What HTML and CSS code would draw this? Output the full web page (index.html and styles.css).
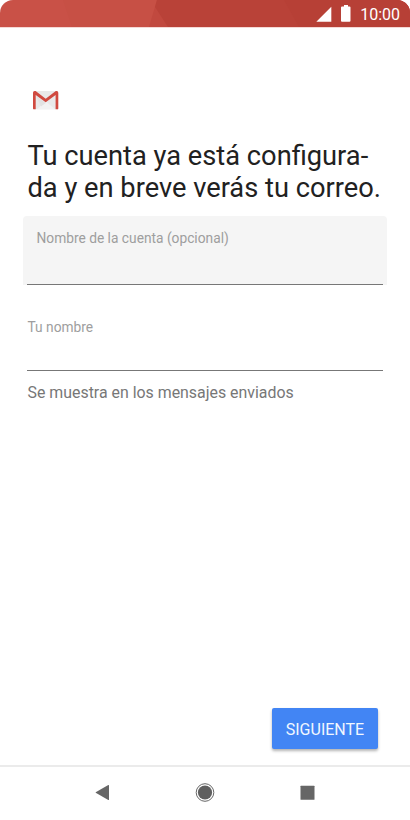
FILE: index.html
```html
<!DOCTYPE html>
<html lang="es">
<head>
<meta charset="utf-8">
<title>Gmail</title>
<link rel="stylesheet" href="styles.css">
</head>
<body>
<div class="screen">
  <header class="status">
    <svg class="status-bg" width="410" height="28" viewBox="0 0 410 28">
      <path fill="#c95147" d="M0 0H410V27H0Z"/>
      <path fill="#c75045" d="M63 0H158L149 27H72Z"/>
      <path fill="#c1493f" d="M157 0H180V27H149Z"/>
      <path fill="#b94238" d="M157 0H410V27H168L155 7Z"/>
      <path fill="#b74036" d="M284 0H410V27H299Z"/>
      <path fill="#f5d9d6" d="M0 27H410V28H0Z"/>
    </svg>
    <svg class="signal" width="16" height="16" viewBox="0 0 16 16"><path fill="#fff" d="M15.3 .7V15.7H.3Z"/></svg>
    <svg class="battery" width="10" height="17" viewBox="0 0 10 17"><path fill="#fff" d="M3 0H7V1.6H8.5Q9.5 1.6 9.5 2.6V15.7Q9.5 16.7 8.5 16.7H1Q0 16.7 0 15.7V2.6Q0 1.6 1 1.6H3Z"/></svg>
    <span class="clock">10:00</span>
  </header>
  <main class="content">
    <svg class="logo" width="26" height="20" viewBox="0 0 26 20">
      <path fill="#e9e9e9" d="M1 0H25V18.3H1Z"/>
      <path fill="#f2f2f2" d="M4 18.3 13 10.5 22 18.3Z"/>
      <path fill="#e2e2e2" d="M3 5 12.7 12 8 15.5Z"/>
      <path fill="#d04a40" d="M0 1.7Q0 0 1.6 0H2.6L12.7 7.7 22.8 0H23.6Q25.3 0 25.3 1.7V17.4Q25.3 18.3 24.4 18.3H22.6V4L12.7 11.3 2.7 4V18.3H1Q0 18.3 0 17.4Z"/>
    </svg>
    <h1 class="title"><span class="line">Tu cuenta ya está configura-</span><span class="line">da y en breve verás tu correo.</span></h1>
    <div class="field filled"><label class="label">Nombre de la cuenta (opcional)</label></div>
    <div class="field plain"><label class="label">Tu nombre</label></div>
    <p class="hint">Se muestra en los mensajes enviados</p>
    <button class="next">SIGUIENTE</button>
  </main>
  <nav class="nav">
    <svg width="410" height="52" viewBox="0 0 410 52">
      <path fill="#666" d="M95.7 25.2 108.3 18Q109 17.7 109 18.5V32.5Q109 33.3 108.3 33L95.7 25.8Z"/>
      <circle cx="205" cy="25.5" r="8.8" fill="none" stroke="#666" stroke-width="1"/>
      <circle cx="205" cy="25.5" r="7.1" fill="#5f5f5f"/>
      <rect x="300.5" y="18.8" width="14" height="14" rx=".5" fill="#666"/>
    </svg>
  </nav>
</div>
</body>
</html>
```
FILE: styles.css
```css
* { box-sizing: border-box; }
body { margin: 0; background: #fff; font-family: Roboto, "Liberation Sans", sans-serif; }
.screen { width: 410px; height: 820px; display: flex; flex-direction: column; overflow: hidden; }
.status { position: relative; display: flex; align-items: flex-start; justify-content: flex-end; height: 28px; padding-right: 10px; border-radius: 13px 13px 0 0; overflow: hidden; flex: none; }
.status-bg { position: absolute; inset: 0; }
.signal, .battery, .clock { position: relative; }
.signal { margin: 6px 9px 0 0; }
.battery { margin: 5px 9px 0 0; }
.clock { margin-top: 5px; font-size: 16px; line-height: 19px; color: #fff; white-space: nowrap; }
.content { flex: 1; display: flex; flex-direction: column; align-items: flex-start; padding: 63px 23px 16px; }
.logo { display: block; margin-left: 10px; flex: none; }
.title { margin: 29px 0 0 4.5px; font-size: 27.25px; line-height: 32px; font-weight: 400; color: #212121; white-space: nowrap; }
.line { display: block; }
.field { flex: none; width: 364px; position: relative; }
.field::after { content: ""; position: absolute; left: 4px; right: 4px; bottom: 0; height: 1px; background: #777; }
.filled { height: 69px; margin-top: 12px; padding: 14px 13.5px; background: #f5f5f5; border-radius: 4px 4px 0 0; }
.plain { height: 86px; padding: 34px 4.5px 0; }
.label { display: block; font-size: 13.75px; line-height: 17px; color: #9e9e9e; white-space: nowrap; }
.hint { margin: 12px 0 0 4.5px; font-size: 15.9px; line-height: 20px; color: #777; white-space: nowrap; }
.next { width: 106.5px; height: 41px; margin: auto 8.8px 0 auto; padding: 2px 0 0; border: 0; border-radius: 2px; background: #4285f4; box-shadow: 0 2px 3px rgba(0,0,0,.3); font: 400 16px/20px Roboto, sans-serif; color: #f1f7ff; }
.nav { height: 55px; flex: none; border-top: 2px solid #ebebeb; }
.nav svg { display: block; }
```
